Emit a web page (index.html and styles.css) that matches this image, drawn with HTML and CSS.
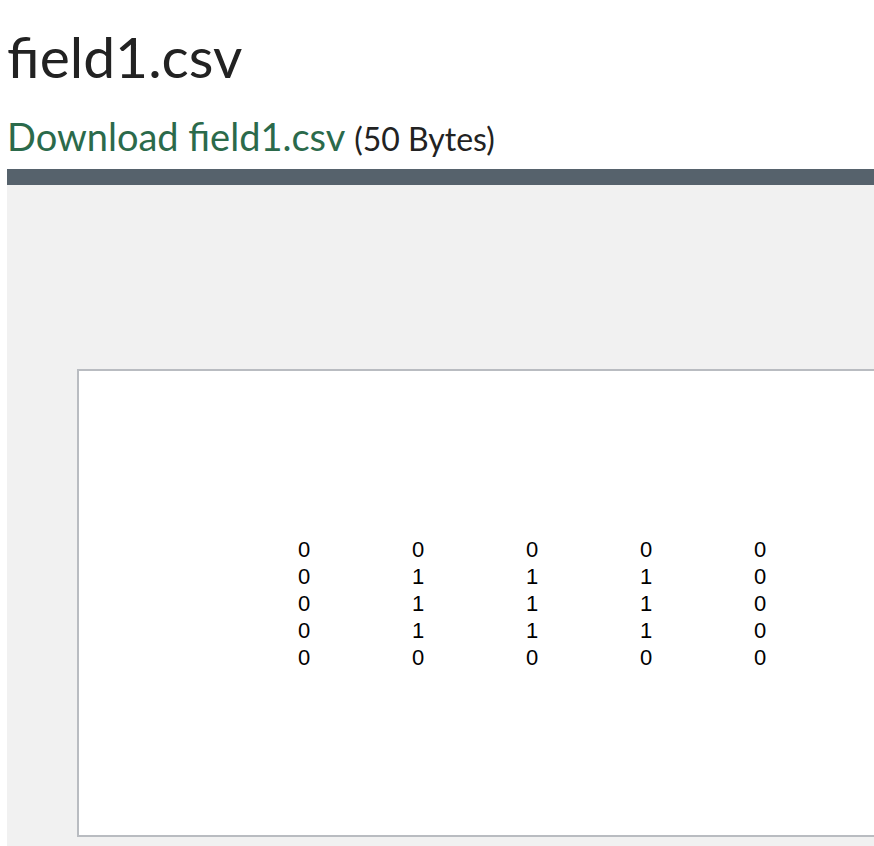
FILE: index.html
```html
<!DOCTYPE html>
<html>
<head>
<meta charset="utf-8">
<link rel="stylesheet" href="styles.css">
</head>
<body>
<h1 class="title">field1.csv</h1>
<p class="download"><a class="download-link" href="#">Download field1.csv</a> <span class="size">(50 Bytes)</span></p>
<div class="preview">
  <div class="preview-bar"></div>
  <div class="preview-body">
    <div class="page">
      <div class="grid">
        <span>0</span><span>0</span><span>0</span><span>0</span><span>0</span>
        <span>0</span><span>1</span><span>1</span><span>1</span><span>0</span>
        <span>0</span><span>1</span><span>1</span><span>1</span><span>0</span>
        <span>0</span><span>1</span><span>1</span><span>1</span><span>0</span>
        <span>0</span><span>0</span><span>0</span><span>0</span><span>0</span>
      </div>
    </div>
  </div>
</div>
</body>
</html>
```
FILE: styles.css
```css
html, body {
  margin: 0;
  padding: 0;
  background: #fff;
  overflow: hidden;
}
body {
  padding-left: 7px;
  font-family: Lato, "Noto Sans", sans-serif;
  color: #222;
}
.title {
  margin: 0;
  padding-top: 22px;
  font-size: 57px;
  font-weight: 400;
  line-height: 68px;
  color: #222;
}
.download {
  margin: 23px 0 0;
  font-size: 38px;
  line-height: 46px;
  height: 56px;
}
.download-link {
  color: #2b6a4b;
  text-decoration: none;
}
.size {
  font-size: 32px;
  color: #222;
}
.preview {
  overflow: hidden;
}
.preview-bar {
  height: 16px;
  background: #56626c;
}
.preview-body {
  background: #f1f1f1;
  padding: 184px 0 9px 70px;
}
.page {
  width: 906px;
  height: 464px;
  background: #fff;
  border: 2px solid #b9bcc1;
  display: flex;
  align-items: center;
  justify-content: center;
}
.grid {
  display: grid;
  grid-template-columns: repeat(4, 114px) auto;
  grid-auto-rows: 27px;
  font-family: "Liberation Sans", Arial, sans-serif;
  font-size: 22px;
  line-height: 27px;
  color: #000;
}
```
